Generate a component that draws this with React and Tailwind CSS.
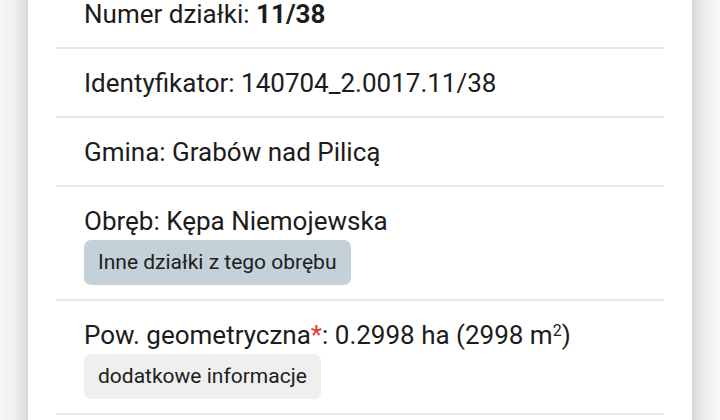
import React from 'react';

// wiersz z informacją o działce
const Row = ({ children, extra }) => (
  <div className="border-b-2 border-[#e8e8e8] px-[28px] pt-[20px] pb-[19px]">
    <div className="leading-[28px]">{children}</div>
    {extra}
  </div>
);

const Btn = ({ children, tone }) => (
  <div className="-mb-[5px] mt-[5px] flex">
    <button
      className={`h-[45px] rounded-[7px] px-[14px] text-[21px] leading-none text-[#202020] ${
        tone === 'blue' ? 'bg-[#c4d1d9]' : 'bg-[#efefef]'
      }`}
    >
      {children}
    </button>
  </div>
);

export default function App() {
  return (
    <div
      className="flex h-[420px] w-[720px] overflow-hidden bg-white text-[26px] text-[#1c1c1c]"
      style={{ fontFamily: 'Roboto, "Noto Sans", sans-serif' }}
    >
      <div className="w-[28px] shrink-0 bg-gradient-to-r from-[#f7f7f7] via-[#f0f0f0] to-[#d9d9d9]" />
      <div className="flex-1 bg-white px-[28px]">
        <div className="-mt-[20px]">
          <Row>
            Numer działki: <b className="font-bold">11/38</b>
          </Row>
          <Row>Identyfikator: 140704_2.0017.11/38</Row>
          <Row>Gmina: Grabów nad Pilicą</Row>
          <Row extra={<Btn tone="blue">Inne działki z tego obrębu</Btn>}>
            Obręb: Kępa Niemojewska
          </Row>
          <Row extra={<Btn>dodatkowe informacje</Btn>}>
            Pow. geometryczna<span className="text-[#e53935]">*</span>: 0.2998 ha (2998 m
            <sup className="text-[16px]">2</sup>)
          </Row>
        </div>
      </div>
      <div className="w-[28px] shrink-0 bg-gradient-to-r from-[#d9d9d9] via-[#efefef] to-[#f8f8f8]" />
    </div>
  );
}
